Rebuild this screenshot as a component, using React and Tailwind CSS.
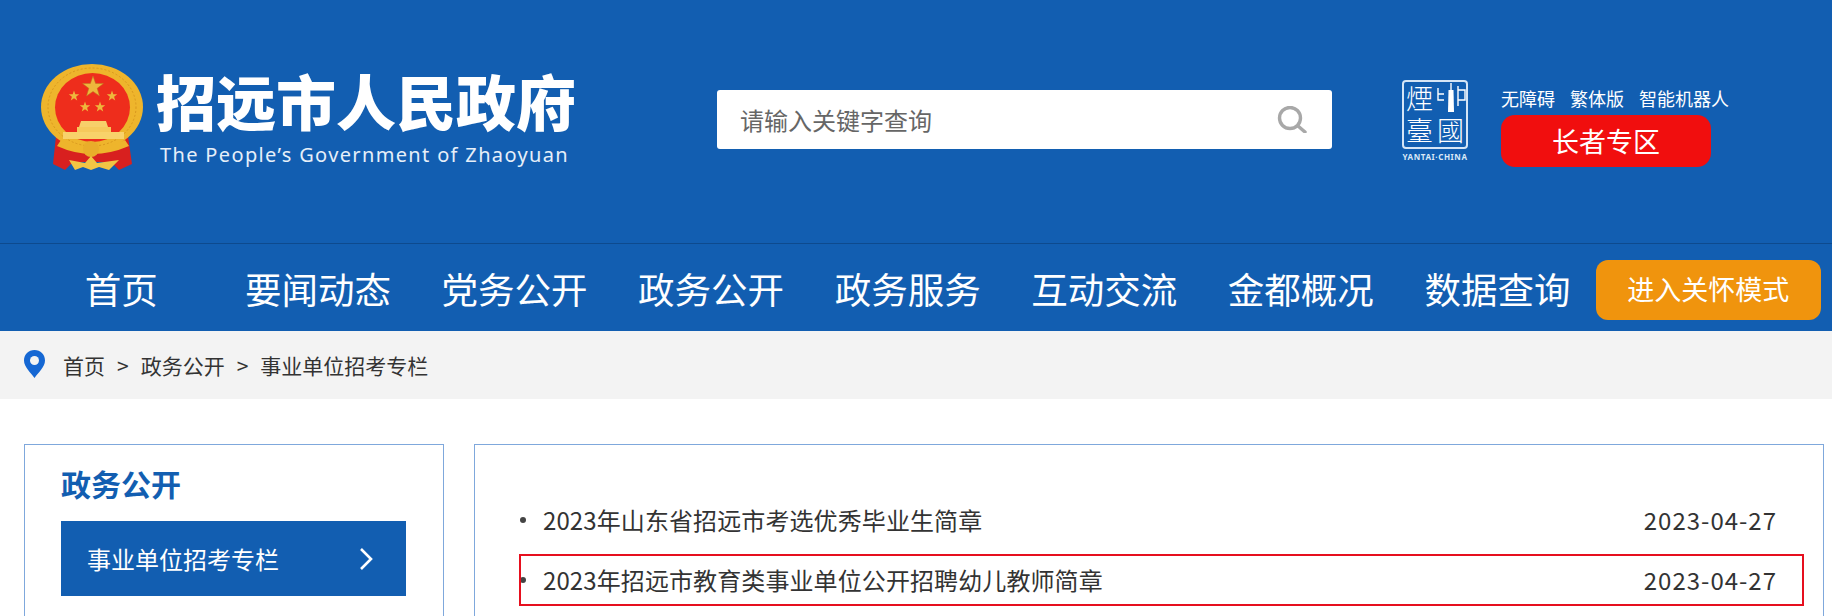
import React from 'react';

const navItems = ['首页', '要闻动态', '党务公开', '政务公开', '政务服务', '互动交流', '金都概况', '数据查询'];

const rows = [
  { title: '2023年山东省招远市考选优秀毕业生简章', date: '2023-04-27' },
  { title: '2023年招远市教育类事业单位公开招聘幼儿教师简章', date: '2023-04-27' },
];

const starPoints = (cx, cy, r) => {
  const pts = [];
  for (let i = 0; i < 10; i++) {
    const rad = i % 2 === 0 ? r : r * 0.4;
    const a = (i * Math.PI) / 5 - Math.PI / 2;
    pts.push(`${(cx + Math.cos(a) * rad).toFixed(2)},${(cy + Math.sin(a) * rad).toFixed(2)}`);
  }
  return pts.join(' ');
};

// National emblem, simplified
const Emblem = () => (
  <svg width="102" height="108" viewBox="0 0 102 108" className="shrink-0">
    <path d="M15 72 L12 100 L24 106 L32 98 L70 98 L78 106 L91 100 L87 72 Z" fill="#d8201f" />
    <ellipse cx="51" cy="43" rx="51" ry="43" fill="#eeb52c" />
    <ellipse cx="51" cy="43" rx="44" ry="39" fill="none" stroke="#d9981f" strokeWidth="1" strokeDasharray="2 2" />
    <ellipse cx="51.5" cy="43.5" rx="37.5" ry="34.5" fill="#ee2d1c" />
    <polygon points={starPoints(52, 23, 11)} fill="#eeb73c" stroke="#b9791c" strokeWidth="0.5" />
    <polygon points={starPoints(33, 32, 5.5)} fill="#eeb73c" />
    <polygon points={starPoints(71, 32, 5.5)} fill="#eeb73c" />
    <polygon points={starPoints(44, 43, 5.5)} fill="#eeb73c" />
    <polygon points={starPoints(59, 43, 5.5)} fill="#eeb73c" />
    <path d="M40 57 L65 57 L67 63 L38 63 Z" fill="#f7cf6a" />
    <rect x="36" y="63" width="34" height="5" fill="#f6c95c" />
    <rect x="22" y="68" width="61" height="7" fill="#f8d26a" />
    <path d="M20 76 Q51 92 84 76 L88 82 Q51 98 16 82 Z" fill="#eeb52c" />
    <circle cx="50" cy="85" r="8" fill="#e9ad2a" />
    <path d="M28 96 L44 99 L50 92 L56 99 L78 96 L68 106 L58 103 L50 106 L42 103 L34 106 Z" fill="#f2c544" />
  </svg>
);

// Yantai seal logo
const Seal = () => (
  <div className="shrink-0 mt-[80px] ml-[70px] w-[66px] flex flex-col items-center text-white">
    <div className="w-[66px] h-[69px] border-2 border-[#d5e5f6] rounded-[4px] grid grid-cols-2 grid-rows-[32px_32px] leading-[32px] text-[27px] font-light place-items-center">
      <span>煙</span>
      <svg width="30" height="32" viewBox="0 0 30 32" fill="none" stroke="#fff" strokeWidth="1.4">
        <path d="M2 6 V18 H8 M2 12 H8 M22 8 H29 V18 H22 M22 4 V24" />
        <path d="M15 1 V8" />
        <path d="M12.5 8 H17.5 L18 30 H12 Z" fill="#fff" stroke="none" />
      </svg>
      <span>臺</span>
      <span>國</span>
    </div>
    <span className="mt-[2px] text-[8px] leading-[12px] font-bold tracking-[0.6px] whitespace-nowrap text-[#dbe8f7] font-['Noto_Sans']">YANTAI·CHINA</span>
  </div>
);

export default function App() {
  return (
    <div
      className="w-[1832px] h-[616px] overflow-hidden bg-white text-[#333]"
      style={{ fontFamily: '"Noto Sans CJK SC", "Noto Sans", sans-serif' }}
    >
      {/* Header */}
      <header className="h-[244px] bg-[#125eb1] border-b border-[#0d4a8e] flex items-start pl-[41px]">
        <div className="mt-[64px]">
          <Emblem />
        </div>
        <div className="ml-[13px] mt-[60px] w-[420px] shrink-0 text-white">
          <div className="text-[60px] leading-[80px] font-black whitespace-nowrap">招远市人民政府</div>
          <div className="mt-[3px] ml-[4px] text-[20px] leading-[24px] tracking-[1.35px] whitespace-nowrap text-[#e6eff9] font-['Noto_Sans']">
            The People’s Government of Zhaoyuan
          </div>
        </div>
        <div className="ml-[141px] mt-[90px] w-[615px] h-[59px] shrink-0 bg-white rounded-[3px] flex items-center pl-[23px] pr-[25px]">
          <span className="flex-1 text-[24px] text-[#666]">请输入关键字查询</span>
          <svg width="30" height="27" viewBox="0 0 30 27" fill="none" stroke="#a8a8a8" strokeWidth="3.4">
            <circle cx="13" cy="12" r="10.5" />
            <path d="M21 20 L28 26" strokeLinecap="round" />
          </svg>
        </div>
        <Seal />
        <div className="ml-[33px] mt-[86px] flex flex-col shrink-0">
          <div className="flex gap-[15px] text-[18px] leading-[24px] text-white whitespace-nowrap">
            <span>无障碍</span>
            <span>繁体版</span>
            <span>智能机器人</span>
          </div>
          <div className="mt-[5px] w-[210px] h-[52px] bg-[#f10e0e] rounded-[14px] flex items-center justify-center text-[27px] text-white">
            长者专区
          </div>
        </div>
      </header>

      {/* Nav */}
      <nav className="h-[87px] bg-[#125eb1] flex items-center pl-[23px] pt-[4px]">
        {navItems.map((item) => (
          <a key={item} className="w-[196.6px] shrink-0 text-center text-[36.5px] text-white whitespace-nowrap">
            {item}
          </a>
        ))}
        <div className="w-[225px] h-[60px] shrink-0 bg-[#f0940d] rounded-[12px] flex items-center justify-center text-[27px] text-white">
          进入关怀模式
        </div>
      </nav>

      {/* Breadcrumb */}
      <div className="h-[68px] bg-[#f3f3f3] flex items-center pl-[24px] text-[21px]">
        <svg width="21" height="28" viewBox="0 0 21 28" className="shrink-0 -mt-[3px]">
          <path d="M10.5 0 C4.5 0 0 4.5 0 10.5 C0 17 7 23 10.5 28 C14 23 21 17 21 10.5 C21 4.5 16.5 0 10.5 0 Z" fill="#1567d3" />
          <circle cx="10.5" cy="10.5" r="4.5" fill="#f3f3f3" />
        </svg>
        <span className="ml-[18px] mt-[1px]">首页</span>
        <span className="ml-[12px] mt-[1px]">&gt;</span>
        <span className="ml-[12px] mt-[1px]">政务公开</span>
        <span className="ml-[12px] mt-[1px]">&gt;</span>
        <span className="ml-[12px] mt-[1px]">事业单位招考专栏</span>
      </div>

      {/* Content */}
      <div className="flex items-start pl-[24px] pt-[45px] gap-[30px]">
        <aside className="w-[420px] h-[300px] shrink-0 border border-[#7fa8dc] pl-[36px] pt-[13px]">
          <h2 className="text-[30px] leading-[50px] font-bold text-[#125eb1]">政务公开</h2>
          <div className="mt-[13px] w-[345px] h-[75px] bg-[#125eb1] flex items-center justify-between pl-[26px] pr-[33px] text-[24px] text-white">
            <span>事业单位招考专栏</span>
            <svg width="14" height="24" viewBox="0 0 14 24" fill="none" stroke="#fff" strokeWidth="2.6">
              <path d="M2 2 L12 12 L2 22" />
            </svg>
          </div>
        </aside>
        <main className="relative w-[1350px] h-[300px] shrink-0 border border-[#7fa8dc] pt-[45px] pl-[45px] pr-[46px]">
          {rows.map((r) => (
            <div key={r.title} className="h-[60px] flex items-center text-[24px] text-[#333]">
              <span className="w-[6px] h-[6px] rounded-full bg-[#444] shrink-0" />
              <span className="ml-[17px] flex-1 whitespace-nowrap tracking-[0.1px]">{r.title}</span>
              <span className="tracking-[1px]">{r.date}</span>
            </div>
          ))}
          {/* red annotation around second row */}
          <div className="absolute left-[44px] top-[109px] w-[1285px] h-[52px] border-2 border-[#e60f1e]" />
        </main>
      </div>
    </div>
  );
}
